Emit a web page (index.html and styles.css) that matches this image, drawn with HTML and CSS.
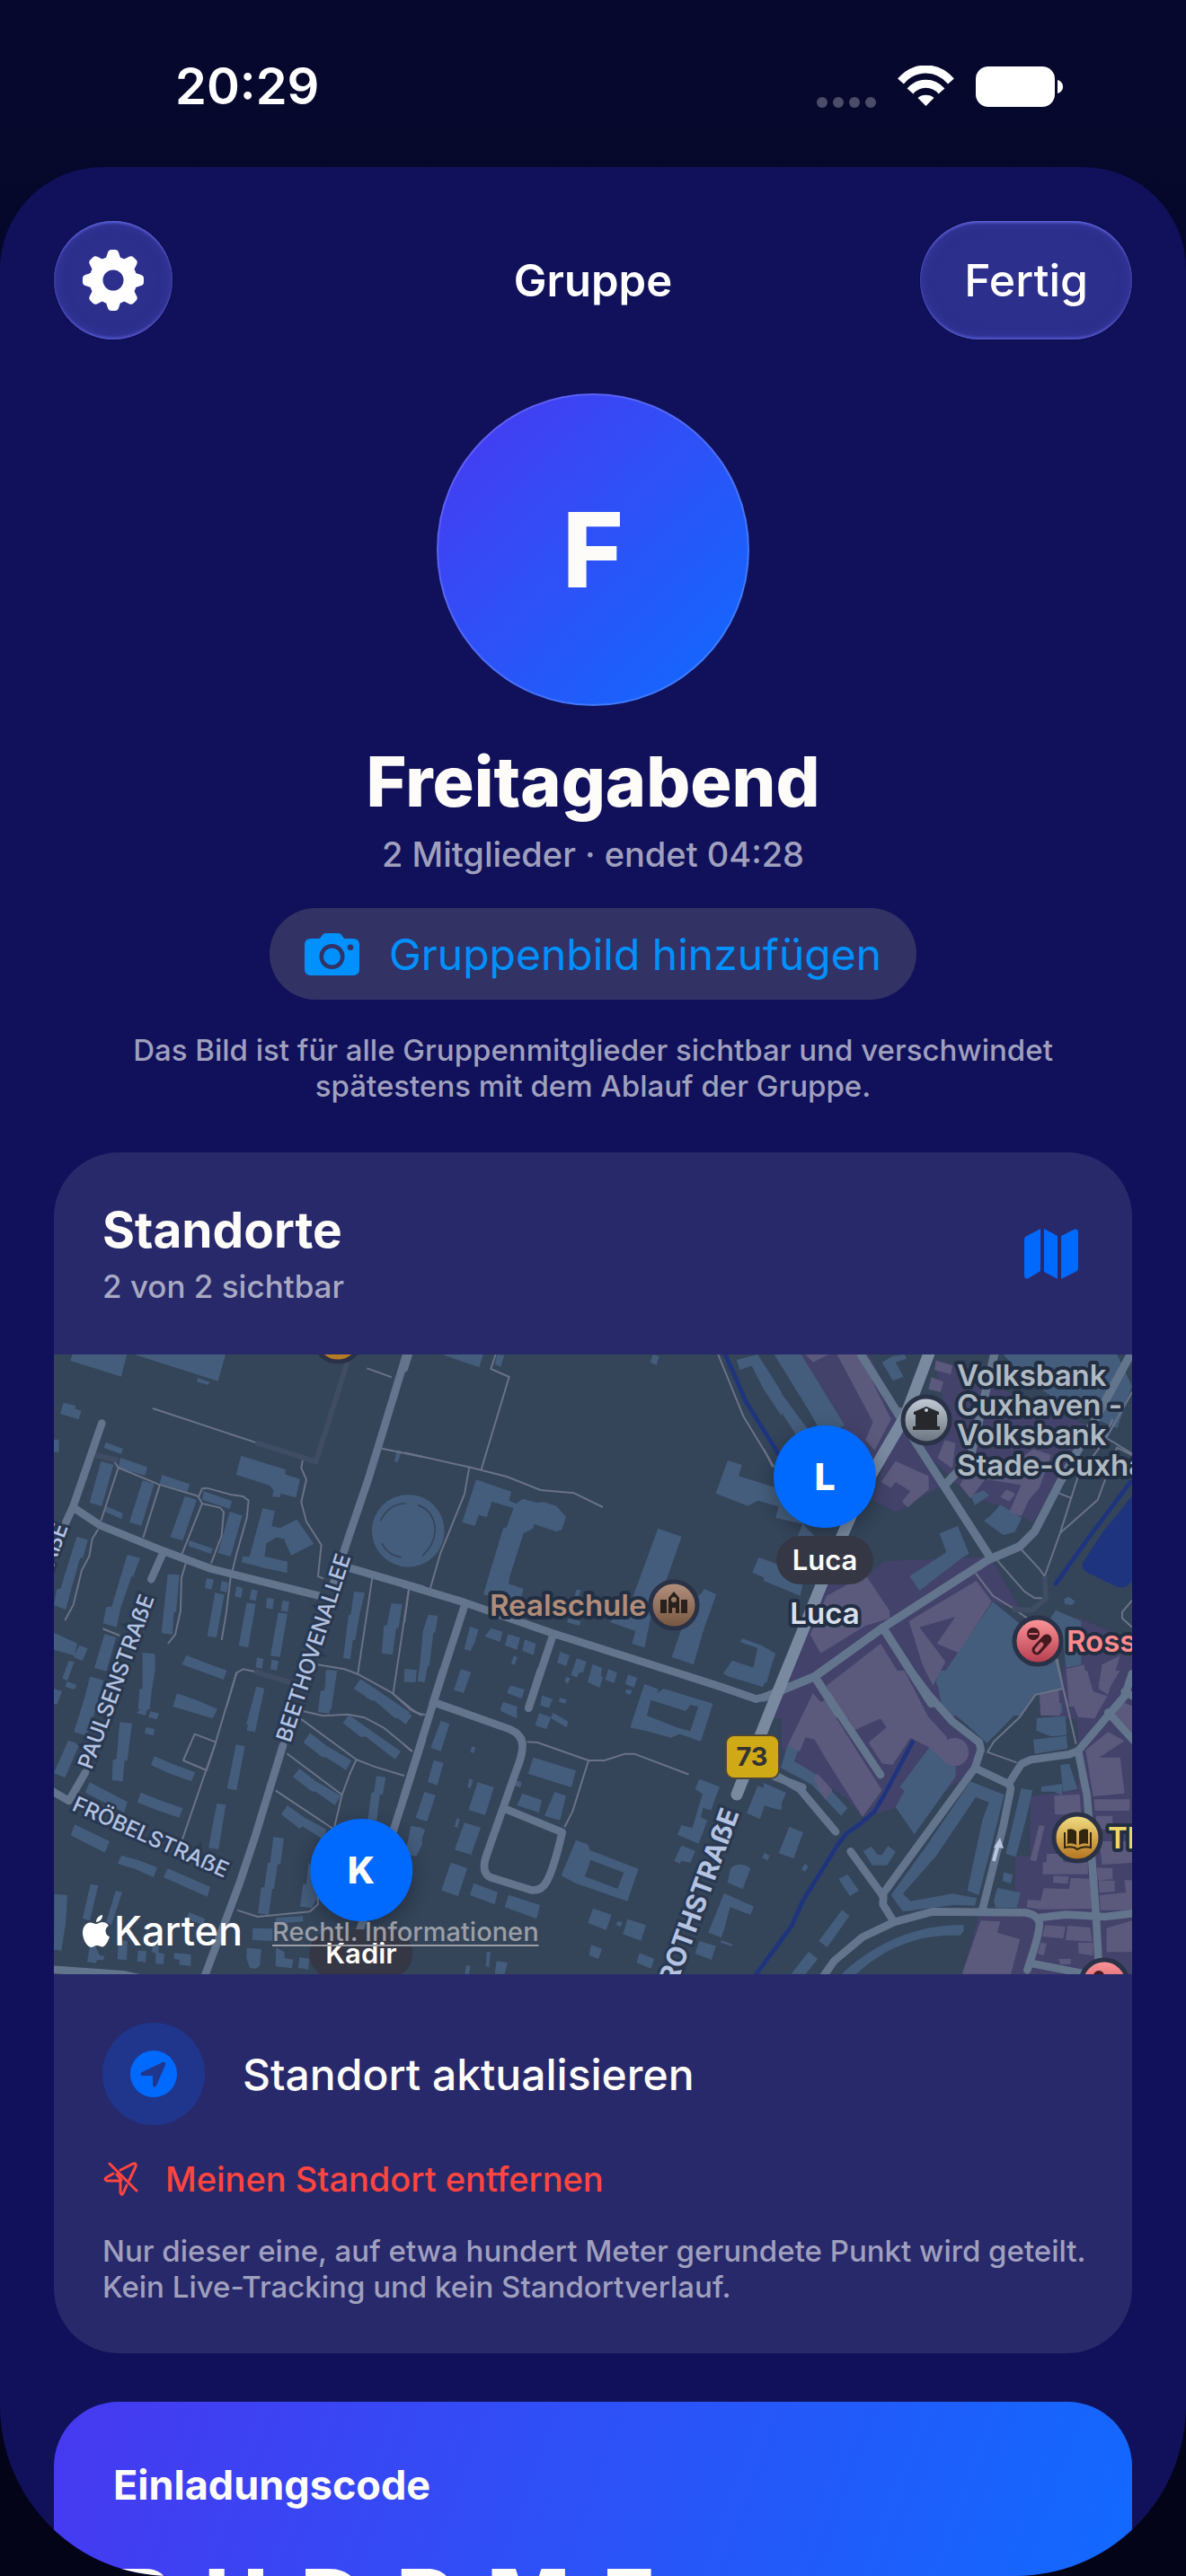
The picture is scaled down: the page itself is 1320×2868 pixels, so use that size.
FILE: index.html
```
<!DOCTYPE html>
<html lang="de">
<head>
	<meta charset="UTF-8">
	<meta name="viewport" content="width=device-width,initial-scale=1">
	<title>Gruppe</title>
	<link rel="stylesheet" href="styles.css">
</head>
<body>
	<div class="screen">
		<div class="status">
			<span class="time">20:29</span>
			<div class="status_icons">
				<span class="dots"><i></i><i></i><i></i><i></i></span>
				<svg class="wifi" viewBox="0 0 63 46" fill="none" stroke="#fff" stroke-width="9">
					<path d="M3.500 17.500C19-0.500 44-0.500 59.500 17.500"/>
					<path d="M14 28.500C23.500 17.500 39.500 17.500 49 28.500"/>
					<path d="M31.500 45L22.500 36C26 31.500 37 31.500 40.500 36Z" fill="#fff" stroke="none"/>
				</svg>
				<svg class="battery" viewBox="0 0 98 45" fill="#fff">
					<rect width="88" height="45" rx="14"/>
					<path d="M91 15C99 17 99 28 91 30Z"/>
				</svg>
			</div>
		</div>

		<main class="sheet">
			<header class="bar">
				<button class="glass round" aria-label="Einstellungen">
					<svg class="gear" viewBox="-34 -34 68 68" fill="#fff">
						<circle r="19" fill="none" stroke="#fff" stroke-width="15"/>
						<g id="teeth">
							<path id="tooth" d="M-9-22L-6-31Q-5-34-2-34H2Q5-34 6-31L9-22Z"/>
							<use href="#tooth" transform="rotate(45)"/>
							<use href="#tooth" transform="rotate(90)"/>
							<use href="#tooth" transform="rotate(135)"/>
						</g>
						<use href="#teeth" transform="rotate(180)"/>
					</svg>
				</button>
				<h1>Gruppe</h1>
				<button class="glass">Fertig</button>
			</header>

			<section class="group">
				<div class="avatar">F</div>
				<h2>Freitagabend</h2>
				<p class="sub">2 Mitglieder · endet 04:28</p>
				<button class="photo">
					<svg class="camera" viewBox="0 0 61 47">
						<path fill="#0091ff" fill-rule="evenodd" d="M7 6H16C18 6 19 1 23 0H38C42 1 43 6 45 6H54Q61 6 61 13V40Q61 47 54 47H7Q0 47 0 40V13Q0 6 7 6ZM30.500 12A14 14 0 1 0 30.500 40A14 14 0 1 0 30.500 12ZM51 12.500A3.200 3.200 0 1 0 51 19A3.200 3.200 0 1 0 51 12.500Z"/>
						<circle cx="30.500" cy="26" r="9.500" fill="#0091ff"/>
					</svg>
					Gruppenbild hinzufügen
				</button>
				<p class="note">Das Bild ist für alle Gruppenmitglieder sichtbar und verschwindet spätestens mit dem Ablauf der Gruppe.</p>
			</section>

			<section class="card">
				<div class="card_head">
					<div>
						<h3>Standorte</h3>
						<p>2 von 2 sichtbar</p>
					</div>
					<svg class="map_icon" viewBox="0 0 60 56" fill="#006aff">
						<path d="M18 0V47L5 55Q0 57 0 51V13Q0 9 3 8Z"/>
						<path d="M22 0L37 8V56L22 48Z"/>
						<path d="M41 8L55 1Q60-1 60 5V43Q60 47 57 48L41 56Z"/>
					</svg>
				</div>

				<div class="map">
					<svg class="map_canvas" viewBox="0 0 1200 690" preserveAspectRatio="xMidYMid slice">
						<defs>
							<linearGradient id="g_school" x2="0" y2="1"><stop stop-color="#b59280"/><stop offset="1" stop-color="#74543f"/></linearGradient>
							<linearGradient id="g_bank" x2="0" y2="1"><stop stop-color="#c5ced8"/><stop offset="1" stop-color="#67717d"/></linearGradient>
							<linearGradient id="g_shop" x2="0" y2="1"><stop stop-color="#ff979a"/><stop offset="1" stop-color="#b43b4d"/></linearGradient>
							<linearGradient id="g_book" x2="0" y2="1"><stop stop-color="#f3e084"/><stop offset="1" stop-color="#b4711c"/></linearGradient>
						</defs>
						<rect width="1200" height="690" fill="#344459"/>

						<!-- commercial areas -->
						<g fill="#43426a">
							<g transform="translate(790 -8) scale(.3333)">
								<path d="M100 0H340L455 230L590 465L440 550L365 510L400 400L270 280Z"/>
								<path d="M570 40L640 60L770 130L1080 260L985 430L900 585L800 530L690 500L590 400L510 320L600 180Z"/>
								<path d="M400 715L755 700L860 880L760 850L580 1130L700 1240H10L150 900L200 790L340 770Z"/>
								<path d="M1040 900L1260 990V1240H960L1000 1080Z"/>
							</g>
							<g transform="translate(790 352) scale(.3333)">
								<path d="M60 60L170 0H480L570 120L740 250L690 340L610 400L440 460L330 490L280 430L150 340L60 260Z"/>
								<path d="M1000 0H1260V1030H660L720 810H840L840 620H890L890 420L1050 400V190Z"/>
							</g>
						</g>

						<!-- buildings -->
						<g fill="#445d7c">
							<g transform="translate(-10 -8) scale(.3333)">
								<path d="M85 45L100 0H280L255 98ZM270 15L290 0H610L578 113ZM510 102L550 116L545 126L507 115ZM62 185L103 195L100 205L122 212L113 241L51 222ZM30 308H47V350H30ZM203 317L261 339L255 357L197 336ZM187 381L229 392L190 531L149 519ZM252 369L342 400L334 428L245 403ZM326 445L365 456L322 596L282 584ZM391 426L484 457L475 483L384 455ZM206 531L261 555L255 574L200 549ZM467 497L507 510L460 646L419 634ZM530 481L625 513L617 540L525 509ZM482 645L560 672L555 690L479 664ZM617 549L659 562L620 699L578 687Z"/>
								<path d="M655 362L803 408V425L852 440L838 502L786 488V501L760 499L763 478L750 461L638 425ZM727 537L768 547L757 597L785 604L841 575L898 657L822 695L798 640L772 635L740 655L733 698L810 716L809 754L735 738L657 718L660 698L683 700Z"/>
								<path d="M106 633L144 643L127 703L117 705L88 808L70 876L30 862L40 808L52 806ZM275 692L318 704L295 766H289L254 868L239 935L194 922L205 868L223 866ZM410 758L449 760L438 884L430 886L426 959L389 955ZM540 771L564 776L556 809L534 804ZM590 780L613 787L607 819L585 813ZM640 798L661 804L655 838L634 832ZM690 808L711 813L704 847L683 842ZM741 836L765 841L760 875L738 870ZM793 845L816 850L811 884L788 880ZM568 820L599 826L573 970L542 965ZM674 853L704 857L679 1002L647 997ZM779 886L810 890L785 1035L753 1030Z"/>
								<path d="M1032 816L1068 820L1050 897L1036 977L1028 979L1020 1042L996 1038L1014 894H1021ZM1157 855L1193 858L1181 937L1173 938L1161 1027L1125 1022L1132 930L1142 928Z"/>
								<path d="M30 953L108 989L98 1030L30 1010ZM115 995L143 1006L125 1048L95 1034ZM80 1047L98 1051L75 1113L58 1106ZM199 958L238 969L205 1082L165 1071ZM150 1101L196 1113L160 1240H115ZM74 1115L106 1128L99 1144L68 1134ZM30 1140L57 1149L40 1194L30 1190ZM326 1020L368 1024V1078L357 1145L350 1210H311L316 1142L326 1140ZM472 1028L540 1055L607 1079L596 1110L530 1085L457 1060ZM441 1156L510 1180L576 1208L560 1240L427 1200ZM708 1036L730 1041L725 1074L704 1069ZM757 1043L780 1048L774 1080L753 1075ZM706 1133L732 1140L700 1260H672ZM938 1077L976 1080L956 1210H914L924 1148L935 1146ZM1056 1109L1110 1145L1220 1220L1170 1240L1100 1180L1031 1140ZM1202 1074L1240 1078L1237 1118L1199 1115Z"/>
								<path d="M1186 344L1190 350L1178 385L1167 380L1175 345Z"/>
							</g>
							<g transform="translate(390 -8) scale(.3333)">
								<circle cx="13" cy="613" r="121"/>
								<path d="M5 522Q-50 520-80 580M45 527Q100 545 103 612Q100 660 60 697M-75 655Q-55 695-10 702" fill="none" stroke="#344459" stroke-width="5"/>
								<path d="M115 20H265L250 67ZM310 24L334 26L322 65L302 58ZM830 24L851 30L842 59L821 51ZM240 442L357 482L350 512L373 522L396 506L446 520L465 517L508 530L540 566L526 608L509 616L432 590V604L398 622L352 766L348 790L398 806L385 860L264 825L288 744L331 602H341L365 536L346 532L292 515L276 567L248 560L236 597L193 584Z"/>
								<path d="M847 605L926 632L876 775L830 870L802 1003L760 990L772 948L685 917L750 870L785 775ZM1001 807L1042 825L1000 942L966 1060L893 1035L960 840L990 825ZM1080 378L1128 393L1116 430L1260 475V535L1180 512L1147 530L1040 488ZM1183 702L1260 730V795L1162 752ZM1128 972L1192 995L1240 1023L1198 1135L1085 1100L1065 1090L1095 1046L1165 1070L1180 1005L1122 985ZM1110 42L1180 24L1260 150V230L1200 140L1160 62L1120 76Z"/>
								<path d="M80 893L112 897L103 952L97 954L84 1064L78 1066L68 1119L44 1116L53 1052L62 948ZM2 1075L42 1078L37 1118H0ZM219 933L248 943L236 984L221 1015L200 1008ZM290 938L328 950L320 984L268 966ZM346 958L387 970L376 1010L336 996ZM402 976L440 990L431 1028L394 1013ZM365 1030L378 1035L368 1061L357 1056ZM189 1075L223 1085L198 1155L165 1145ZM359 1130L402 1143L392 1172L343 1155ZM330 1186L376 1200V1240L322 1215ZM521 1016L552 1030L541 1064L510 1054ZM576 1038L608 1050L597 1087H583L577 1103L556 1095ZM540 1100L555 1106L545 1124L536 1117ZM629 1058L660 1070L657 1097L663 1104L652 1137L612 1118ZM681 1075L711 1087L700 1122L671 1110ZM747 1093L778 1105L767 1137L738 1125ZM741 1142L762 1146L755 1161L738 1155ZM460 1163L495 1175L482 1205L455 1196ZM520 1170L543 1178L537 1190L516 1184ZM575 810H590L580 840L560 860ZM550 905L590 915L584 930L542 918Z"/>
							</g>
							<g transform="translate(790 -8) scale(.3333)">
								<path d="M20 0H110L270 260L200 300L150 210ZM0 75L160 290L120 310L0 130ZM0 460L60 480L140 600L180 640H110L130 590L40 570L50 530L0 510ZM395 50L430 30L470 24L477 38L440 50L467 98L432 112ZM587 622L648 597L686 690L660 705L520 813L487 765L610 685ZM0 708L70 735L130 790L122 830L50 800L0 780ZM690 495L735 478L753 495L705 527ZM760 560L790 525L862 570L838 618L800 627L735 580ZM765 850L900 960L985 1060L1000 1130L910 1160L860 1230H600L580 1120ZM1003 840L1020 833L1040 850L1030 861L1006 858ZM975 878L1060 915V1060L1010 1070L1000 990L955 910ZM0 1005L38 1022L10 1120H0ZM800 24H1180L1230 130L1180 270L1010 200L860 90Z"/>
							</g>
							<g transform="translate(-10 352) scale(.3333)">
								<path d="M327 123L342 128L336 150L306 142ZM352 136L381 143L374 163L345 155ZM337 189L367 195L362 216L333 209ZM154 20L196 33L140 218L97 205ZM250 172L291 176L275 300L266 302L260 370L224 366L227 298L239 295ZM78 233L115 246L67 358L30 342ZM365 286L435 315L502 340L489 370L420 345L354 316ZM706 54L733 60L702 205L674 200ZM638 247L668 252L640 400L608 394ZM574 444L604 448L580 597L546 592ZM149 373L276 439L264 474L135 407ZM320 407L390 435L461 460L448 491L380 468L309 440ZM100 514L216 570L200 608L86 550ZM255 617L310 632L375 657L363 690L300 662L243 645ZM410 661L552 722L542 755L396 690ZM152 713L178 718L150 835L126 828ZM236 735L258 740L222 850L205 840ZM32 747L75 749L70 840L55 935L30 932ZM480 807L534 828L530 850L474 830ZM156 890L182 950L200 955L195 967L175 966L170 977L141 972ZM246 900L276 903L273 967L242 964ZM311 935L339 937L336 974L308 971ZM360 918L380 920L379 942L399 945L396 980L369 979L370 945L356 938ZM432 943L488 948L487 987L448 982L450 966L430 963ZM694 860L760 862V903L692 900ZM674 926L722 930L718 985L705 996L684 993L673 960ZM772 925L800 940V960L829 965L825 994L770 988ZM850 957L883 962L880 998L846 992ZM772 825L862 820V838L770 845Z"/>
								<path d="M885 208L942 252L1024 300L1005 332L940 290L925 288L863 240ZM850 327L905 370L988 418L968 450L905 405L890 403L828 355ZM810 450L865 490L940 530L930 565L860 520L850 528L789 480ZM1015 148L1070 187L1188 270L1170 297L1070 220L1055 222L995 175ZM1052 30L1108 70L1225 150L1205 180L1105 100L1090 100L1031 60ZM946 0H974L950 144L912 138L920 68L933 66ZM1107 352L1138 356L1128 413L1118 414L1108 500H1078L1090 408L1099 406ZM763 555L798 560L787 645L777 648L765 728L759 730L747 815L711 810L722 725L733 723L744 643L752 641ZM880 640L890 660L910 760L890 793L852 788L862 714L873 712ZM1222 518L1260 525V580L1240 620L1205 610ZM1260 430V500L1240 490Z"/>
							</g>
							<g transform="translate(390 352) scale(.3333)">
								<path d="M122 167L151 178L122 269L88 258ZM98 299L131 308L110 383L78 371ZM67 405L104 416L76 504L38 491ZM27 519L70 531L36 620L0 610ZM227 252L238 258L231 277L220 271ZM218 360L229 365L221 394L211 389ZM245 372L299 390L270 483L214 465ZM176 492L185 497L177 526L167 521ZM200 508L255 524L223 615L168 598ZM155 641L210 660L180 753L124 734ZM232 710L312 740L302 781L219 750ZM348 749L453 783L442 829L335 790ZM431 290L573 334L558 390L413 344ZM372 366L392 373L388 390L368 384ZM394 410L459 433L450 474L376 450ZM502 405L540 418L520 500L468 485ZM330 105L377 120L368 146L320 130ZM352 52L400 64L390 92L343 74ZM450 142L490 155L475 196L437 183ZM460 84L495 97L483 124L454 114ZM495 140L548 170L542 190L490 160ZM630 794L692 815L674 867L613 842ZM745 830L807 850L790 902L730 880ZM624 915L660 930L648 963L617 950ZM785 943L834 962L824 996L776 976ZM712 836L729 840L722 856L707 850ZM275 938L288 940L283 990L272 988ZM308 970L345 975L335 1013H302ZM206 984L221 986L216 1013H202Z"/>
								<path fill-rule="evenodd" d="M802 44L848 62L845 75L865 60L1031 110L990 236L920 212L890 224L820 205L754 190ZM823 98L810 150L910 190L955 202L982 120L955 115L940 135Z"/>
								<path fill-rule="evenodd" d="M573 566L612 580L620 600L782 662L745 770L572 710L524 685ZM622 632L603 688L712 728L733 675Z"/>
								<path d="M985 362L1053 388L1024 467L998 458L990 490L1012 500L983 578L912 548L925 516L962 525L996 412L971 395ZM925 584L972 602L955 642L925 635L920 645L901 635ZM1180 385L1260 410V465L1203 450L1188 496L1143 476ZM1090 660Q1120 635 1156 660L1130 730L1079 708ZM1068 743L1167 788L1156 816L1088 790L1068 865L1058 892L1015 875ZM1060 900L1097 915L1093 920L1055 908ZM985 903L1041 920L1025 966L971 945ZM1203 608L1220 618L1212 634L1195 625ZM1065 0H1220L1195 54Z"/>
							</g>
							<g transform="translate(790 352) scale(.3333)">
								<path d="M585 0H980L1000 60L910 75L745 243L700 200L620 130L575 40ZM80 247L117 262L102 302L180 350L280 460L258 485L160 380L57 325ZM555 254L642 322L640 355L503 547L440 455L470 402L455 388ZM0 375L75 408L50 465L0 450ZM85 521L132 540L100 627L50 610ZM138 644L149 655L138 671L126 663ZM332 604L360 587L380 615H395L415 585L441 605L412 650H363ZM250 695L280 681L318 735L288 753ZM262 799L286 820L212 924L184 903ZM150 938L181 963L140 1013H92ZM260 1013C380 900 520 848 668 850V870L655 885C540 880 420 910 310 1013Z"/>
								<path fill-rule="evenodd" d="M690 370L803 415L757 600L718 750L680 735L730 500L752 440L708 423L575 620L465 745L490 770L630 745L712 760L705 785L640 782L465 805L425 750L540 590Z"/>
								<path d="M860 393L898 400L875 500L842 622L808 612ZM802 673L832 682L825 712L797 702ZM780 725L858 742L845 792H775L768 770ZM912 158L1007 152L1012 215L960 220L910 200ZM900 230L1010 218L1015 260L905 278ZM925 115L995 108L998 142L930 147ZM990 315L1020 311L1048 395L1000 405ZM927 388L997 378V418L970 404H927Z"/>
							</g>
						</g>
						<g fill="#5b5a7d">
							<g transform="translate(790 -8) scale(.3333)">
								<path d="M140 24H215L165 50ZM245 24H320L395 180L425 240L370 345L340 310L365 250ZM440 380L550 430L552 475L480 535L462 515L490 480L440 450L425 470L392 450ZM575 45L630 60L625 90L570 75ZM560 100L600 115L590 150L550 140ZM605 310L640 320L630 405L580 370ZM655 460L700 380L820 400L900 340L960 360L920 470L885 510L860 565L820 550L860 460L740 440L690 505ZM810 475L840 490L820 515L790 500ZM340 760L420 880V905L340 930L190 1022L155 960L210 830ZM485 915L710 780L762 850L650 1020L578 990L640 900L520 935L607 1050L565 1130L530 1060ZM210 1130L390 990L545 1240H260ZM1010 1075L1070 1060L1090 1200H1020ZM1130 1060L1190 1030L1150 1160L1118 1140ZM920 1155L985 1145L990 1230H925Z"/>
							</g>
							<g transform="translate(790 352) scale(.3333)">
								<path d="M212 50L290 0H470L550 155L610 220L640 320L590 290L550 255L490 225L430 315L395 310L350 240L410 190L390 160L300 200L270 130ZM165 75L190 105L205 100L395 400L330 488L205 290L170 230L140 222L120 270L80 250ZM165 360L180 345L230 400L205 430Z"/>
								<circle cx="637" cy="272" r="47"/>
								<path d="M1015 0H1080L1100 70L1147 85L1105 160L1050 155L1020 80ZM1140 0H1190L1150 65L1118 45ZM1185 100L1260 130V240L1170 150ZM1075 265L1150 205L1205 235L1120 290L1190 290L1205 410L1100 420ZM970 418L1055 413L1060 480H972ZM920 515L938 520L910 637L890 632ZM1103 430H1222V468H1106ZM945 612H1000V640H1083V680H932V640H945ZM968 685L1018 688L1015 712L966 708ZM935 727L1020 730L1025 692L1088 695L1095 795L920 797L878 790L882 765L925 768ZM1112 658L1165 660V697L1115 700ZM1118 700L1172 702V738L1120 742ZM1110 485H1165V530H1110ZM1120 570H1260V640L1130 648ZM1205 700H1260V800H1215ZM1120 750L1220 740L1225 800H1125ZM725 835L790 838L780 875L856 897L825 1013H662ZM940 850L1008 855L1000 895L930 888ZM1015 852L1090 858L1098 905L1008 900ZM1145 860L1230 835V940H1145ZM1050 908L1100 910V952L1052 945ZM925 908L945 912L935 952L915 945ZM985 963L1025 962V980L990 982Z"/>
							</g>
						</g>

						<!-- water -->
						<g fill="none" stroke="#1f347e" stroke-width="14" stroke-linecap="round" stroke-linejoin="round">
							<path transform="translate(390 -8) scale(.3333)" d="M1070 20L1110 110L1140 180L1255 365"/>
							<g transform="translate(790 -8) scale(.3333)">
								<path d="M975 790L1090 630L1225 450"/>
								<path fill="#1f347e" stroke="none" d="M1260 460L1130 620L1065 720Q1060 740 1080 752L1180 800Q1210 808 1225 785L1260 750Z"/>
							</g>
							<path transform="translate(790 352) scale(.3333)" d="M497 238L400 420L370 470L325 510L275 545L245 585L130 770L95 850L0 980L-40 1035"/>
						</g>

						<!-- footpaths -->
						<g fill="none" stroke="#6a7286" stroke-width="6" stroke-linejoin="round">
							<g transform="translate(-10 -8) scale(.3333)">
								<path d="M360 204L710 320M1075 70L1158 100M1125 338L1260 366M230 380L245 402L380 458L505 495L513 500L525 472L540 470L620 492L662 498L680 512L674 570L640 690L620 770L605 890L590 978M245 402L187 580M384 458L328 636M513 500L525 522L458 690M525 522L585 536L597 550L590 630L555 722M178 608L158 640L148 698L123 745L95 860L67 912M193 940L250 963M470 722L456 770L453 880L435 960L411 990M861 375L856 403L873 442L856 517L873 582L923 660L912 765L930 773M1093 770L1045 1090M1215 810L1163 1155M910 1060L1000 1075L1045 1092L1160 1155L1220 1205M607 1200L640 1087L662 1075L700 1083"/>
							</g>
							<g transform="translate(390 -8) scale(.3333)">
								<path d="M0 352L215 400L342 432L455 477L567 487L663 534M305 24L289 72L350 99L257 408M217 400L201 490L120 690L87 805M15 810L0 920M1048 24L1132 230L1235 400"/>
							</g>
							<g transform="translate(790 -8) scale(.3333)">
								<path d="M0 340L30 400M1230 150L1140 310L1050 430L990 620L938 765L920 740L860 675M990 620L1115 510L1180 335L1230 360M985 487L1025 503M780 712L870 815L905 838H930M708 755L765 830L830 870L880 905M1230 845L1197 885V905L1230 935M975 1040L1015 1200M1165 240L1140 300L1230 355"/>
							</g>
							<g transform="translate(-10 352) scale(.3333)">
								<path d="M640 5L570 240L455 575M500 212L571 239L540 333L462 300ZM860 135L930 151L1010 146L1068 157L1130 190L1228 270M850 158L1040 297L1098 320L1200 351M1040 297L1018 345L992 415L965 530M808 277L992 415M770 400L965 530M642 800L710 822L885 805L912 780V700M1160 75L1220 130L1260 150"/>
							</g>
							<g transform="translate(390 352) scale(.3333)">
								<path d="M0 110C30 135 50 148 70 147M410 238L445 240L615 300H668L737 278H768L950 347M615 300L562 470L535 523M0 248L25 270"/>
							</g>
							<g transform="translate(790 352) scale(.3333)">
								<path d="M980 -40L1000 60L1043 245M1000 60L908 80L855 155L768 238L747 272L845 307"/>
							</g>
						</g>
						<g fill="none" stroke="#3f4c64" stroke-width="18" stroke-linejoin="round">
							<path transform="translate(-10 -8) scale(.3333)" d="M703 318L905 382L1010 50M170 360L245 378M700 1083L820 1120"/>
							<path transform="translate(790 -8) scale(.3333)" d="M938 765L942 840L895 878L830 875"/>
						</g>

						<!-- streets -->
						<g fill="none" stroke="#63748d" stroke-linecap="round" stroke-linejoin="round">
							<g transform="translate(-10 -8) scale(.3333)" stroke-width="26">
								<path d="M190 254L95 530L70 585M95 535L185 595L395 680L555 740L915 830M395 685L355 775M1207 24L1080 440L1012 640L960 800M1010 735L1260 808"/>
							</g>
							<g transform="translate(390 -8) scale(.3333)" stroke-width="26">
								<path d="M0 792L200 852L495 955L1060 1135L1175 1175L1240 1158M202 860L95 1190M497 960L415 1205M0 70L14 24"/>
							</g>
							<g transform="translate(790 -8) scale(.3333)" stroke-width="28">
								<path d="M325 24L510 320L755 700M1225 24L1140 180L990 450L905 615L855 665L750 710L400 935L170 1100L0 1170M455 215L510 320M400 940L560 1190M170 1100L250 1225M610 455L690 370L770 24"/>
							</g>
							<g transform="translate(-10 352) scale(.3333)" stroke-width="26">
								<path d="M135 340L80 435L20 400M795 250L700 560L650 710L530 1030M1260 230L1165 530L1040 900M20 998L260 1015L330 1030"/>
							</g>
							<g transform="translate(390 352) scale(.3333)" stroke-width="26">
								<path d="M130 0L90 130L0 420M110 110L350 195Q400 215 394 260Q392 290 375 330L275 615Q255 670 285 690L420 732Q455 740 475 705Q500 660 527 540L345 465M415 125L455 0M1200 340L1330 390"/>
							</g>
							<g transform="translate(790 352) scale(.3333)" stroke-width="26">
								<path d="M0 90L170 20M170 20L390 348M490 0L550 80L630 170L720 240L725 265L705 325L395 750M50 355L120 395L240 538M290 604L400 755L398 780L435 840M705 325L820 380L825 395L800 520L730 800M820 375L860 312L890 298L1020 280L1050 268L1205 85L1230 10M1205 70L1260 100M1150 140L1260 260M1050 268L1080 420L1110 820L1120 1013M200 1020L235 970L330 890L435 840L565 805L870 808Q910 812 920 840Q925 870 880 1000M920 825L1010 815L1140 822L1260 808M895 978L1060 1010"/>
							</g>
							<g stroke="#7889a0">
								<path stroke-width="13" d="M975 -4L948 68L900 150L865 230L800 390L760 490"/>
							</g>
						</g>
						<path d="M1046 564L1051 545" stroke="#b9c6e0" stroke-width="4"/>
						<path d="M1053 538L1057 550L1051 549L1046 549Z" fill="#b9c6e0"/>

						<!-- street names -->
						<g class="street">
							<text transform="translate(42 463) rotate(-70)">PAULSENSTRAẞE</text>
							<text transform="translate(263 433) rotate(-72)">BEETHOVENALLEE</text>
							<text transform="translate(19 507) rotate(24)">FRÖBELSTRAẞE</text>
							<text transform="translate(16 192) rotate(-70)" text-anchor="end">STRAẞE</text>
							<text class="main_street" transform="translate(763 510) rotate(-70)" text-anchor="end">ROTHSTRAẞE</text>
						</g>
						<rect x="748" y="424" width="59" height="48" rx="9" fill="#d0a916" stroke="#4b463d" stroke-width="2"/>
						<text class="route" x="777" y="458" text-anchor="middle">73</text>

						<!-- places -->
						<g stroke="#2a3247" stroke-width="5">
							<circle cx="316" cy="-18" r="26" fill="#b67b24"/>
							<circle cx="690" cy="279" r="26" fill="url(#g_school)"/>
							<circle cx="971" cy="73" r="26" fill="url(#g_bank)"/>
							<circle cx="1095" cy="319" r="26" fill="url(#g_shop)"/>
							<circle cx="1139" cy="538" r="26" fill="url(#g_book)"/>
							<circle cx="1169" cy="700" r="26" fill="url(#g_shop)"/>
						</g>
						<path fill="#2b211c" fill-rule="evenodd" d="M675 273H682V288H675ZM698 273H705V288H698ZM684 288V271L690 264L696 271V288H692V282H688V288ZM690 270A3 3 0 1 0 690 276A3 3 0 1 0 690 270Z"/>
						<path fill="#26282b" d="M957 64L971 58L985 64V67H983V80H986V84H956V80H959V67H957Z"/>
						<circle cx="971" cy="62" r="2" fill="#c5ced8"/>
						<circle cx="1090" cy="311" r="7" fill="#45191e"/>
						<path d="M1085 311H1095" stroke="#d06871" stroke-width="2"/>
						<path d="M1094 329L1105 317" stroke="#45191e" stroke-width="11" stroke-linecap="round"/>
						<path d="M1094 329L1099 323" stroke="#d06871" stroke-width="5" stroke-linecap="round"/>
						<path fill="#33260f" d="M1128 529Q1134 527 1138 531V546Q1133 543 1128 545ZM1151 529Q1145 527 1141 531V546Q1146 543 1151 545Z"/>
						<path d="M1125 532V549Q1134 547 1139 551Q1145 547 1154 549V532" fill="none" stroke="#33260f" stroke-width="2"/>
						<circle cx="1163" cy="692" r="6" fill="#45191e"/>
						<g class="place">
							<text x="485" y="291" fill="#b08c79">Realschule</text>
							<g fill="#b0bac2">
								<text x="1005" y="35">Volksbank</text>
								<text x="1005" y="68">Cuxhaven -</text>
								<text x="1005" y="101">Volksbank</text>
								<text x="1005" y="135">Stade-Cuxhaven</text>
							</g>
							<text x="1127" y="331" fill="#ff898d">Rossmann</text>
							<text x="1173" y="550" fill="#eed668">Thalia</text>
							<text x="858" y="300" fill="#d9dfea" text-anchor="middle">Luca</text>
						</g>
					</svg>

					<div class="pin luca">
						<span class="pin_dot">L</span>
						<span class="pin_name">Luca</span>
					</div>
					<div class="pin kadir">
						<span class="pin_dot">K</span>
						<span class="pin_name">Kadir</span>
					</div>

					<div class="credits">
						<span class="brand">
							<svg class="apple" viewBox="0 0 30 36" fill="#fff">
								<path d="M15 10C17 10 19 8 22 8C25 8 27.500 9.500 29 12C24 15 24.500 22 30 24.500C28 30 25 35.500 22 35.500C19.500 35.500 18.500 34 16 34C13 34 12 36 9.500 36C5 36 0 27 0 20C0 13 4 8.500 8.500 8.500C11 8.500 13 10 15 10ZM15 8C15 4 18 0.500 22 0C22.500 4 19 8 15 8Z"/>
							</svg>
							Karten
						</span>
						<a href="#" class="legal">Rechtl. Informationen</a>
					</div>
				</div>

				<div class="card_body">
					<button class="refresh">
						<span class="refresh_icon">
							<svg viewBox="0 0 52 52">
								<circle cx="26" cy="26" r="26" fill="#006aff"/>
								<path fill="#1f368c" d="M36 13Q40 12 39 16L29 39Q26 43 25 38V28H14Q9 27 13 24Z"/>
							</svg>
						</span>
						Standort aktualisieren
					</button>
					<button class="remove">
						<svg viewBox="0 0 40 38" fill="none" stroke="#ff453f" stroke-width="3" stroke-linecap="round" stroke-linejoin="round">
							<path d="M20 9L34 2Q38 1 37 5L30 20M27 26L23 35Q21 38 20 34V21H5Q1 19 5 17L12 13M8 2L38 32M16 14L21 20"/>
						</svg>
						Meinen Standort entfernen
					</button>
					<p class="note">Nur dieser eine, auf etwa hundert Meter gerundete Punkt wird geteilt. Kein Live-Tracking und kein Standortverlauf.</p>
				</div>
			</section>

			<section class="invite">
				<h3>Einladungscode</h3>
				<p class="code">BUDRMF</p>
			</section>
		</main>
	</div>
</body>
</html>
```
FILE: styles.css
```
* {
	padding: 0;
	margin: 0;
	box-sizing: border-box;
}

html {
	background: #040418;
}

body {
	color: #fff;
	font-family: Inter, "Noto Sans", sans-serif;
}

button {
	border: 0;
	background: none;
	color: inherit;
	font: inherit;
	cursor: pointer;
}

svg {
	display: block;
	flex: none;
}

.screen {
	height: 100vh;
	display: flex;
	flex-direction: column;
	background: linear-gradient(#06082e, #05072a 10%, #040418);
}

/* status bar */
.status {
	height: 186px;
	padding: 6px 136px 0 195px;
	display: flex;
	flex: none;
	justify-content: space-between;
	align-items: center;
}

.time {
	font-size: 56px;
	font-weight: 600;
}

.status_icons {
	display: flex;
	align-items: center;
	gap: 24px;
}

.dots {
	display: flex;
	gap: 6px;
	padding-top: 36px;
}

.dots i {
	width: 12px;
	height: 12px;
	border-radius: 50%;
	background: #4b4c69;
}

.wifi {
	width: 63px;
	height: 46px;
}

.battery {
	width: 98px;
	height: 45px;
}

/* sheet */
.sheet {
	flex: 1;
	padding: 60px 60px 0;
	display: flex;
	flex-direction: column;
	overflow: hidden;
	background: #10115a;
	border-radius: 114px 114px 190px 190px;
}

.sheet > * {
	flex: none;
}

.bar {
	display: grid;
	grid-template-columns: 1fr auto 1fr;
	align-items: center;
}

.bar h1 {
	font-size: 49px;
	font-weight: 600;
}

.glass {
	height: 132px;
	padding: 0 49px;
	border-radius: 66px;
	background: #2d2f8c;
	box-shadow: inset 0 3px 3px -1px #5f61dc, inset 0 -3px 3px -1px #5658d2, inset 0 0 14px #393ba0, 0 0 0 1px #0b0c44;
	font-size: 50px;
	font-weight: 500;
	justify-self: end;
}

.round {
	width: 132px;
	padding: 0 32px;
	justify-self: start;
}

.gear {
	width: 68px;
	height: 68px;
}

/* group */
.group {
	display: flex;
	flex-direction: column;
	align-items: center;
	padding: 60px 66px 54px;
	text-align: center;
}

.avatar {
	width: 348px;
	height: 348px;
	border: 2px solid rgba(255, 255, 255, .16);
	border-radius: 50%;
	background: linear-gradient(135deg, #4a38f0, #0f6bff) border-box;
	color: #fdfcf8;
	font-size: 116px;
	font-weight: 800;
	line-height: 344px;
}

.group h2 {
	margin-top: 36px;
	color: #fdfcf8;
	font-size: 77px;
	font-weight: 800;
	line-height: 96px;
}

.sub {
	margin-top: 9px;
	color: #a0a0be;
	font-size: 38px;
	font-weight: 500;
	line-height: 48px;
}

.photo {
	height: 102px;
	margin: 36px 0;
	padding: 0 39px;
	display: flex;
	align-items: center;
	gap: 33px;
	border-radius: 51px;
	background: #323265;
	color: #0091ff;
	font-size: 48px;
}

.camera {
	width: 61px;
	height: 47px;
}

.note {
	color: #a0a0be;
	font-size: 33px;
	font-weight: 500;
	line-height: 40px;
}

/* locations card */
.card {
	border-radius: 72px;
	background: #28296b;
	overflow: hidden;
}

.card_head {
	padding: 54px;
	display: flex;
	justify-content: space-between;
	align-items: center;
}

.card_head h3 {
	color: #fdfcf8;
	font-size: 55px;
	font-weight: 700;
	line-height: 64px;
}

.card_head p {
	margin-top: 9px;
	color: #a9a9c3;
	font-size: 35px;
	font-weight: 500;
	line-height: 44px;
}

.map_icon {
	width: 60px;
	height: 56px;
	margin-right: 6px;
}

.map {
	position: relative;
	height: 690px;
	overflow: hidden;
}

.map_canvas {
	width: 100%;
	height: 100%;
}

.street {
	fill: #b4c3e2;
	stroke: #293850;
	stroke-width: 6px;
	paint-order: stroke;
	font-size: 24px;
	font-weight: 500;
}

.main_street {
	font-size: 30px;
	font-weight: 700;
}

.route {
	fill: #333;
	font-size: 29px;
	font-weight: 700;
}

.place {
	stroke: #222e42;
	stroke-width: 8px;
	stroke-linejoin: round;
	paint-order: stroke;
	font-size: 33px;
	font-weight: 600;
}

/* map pins */
.pin {
	position: absolute;
	display: flex;
	flex-direction: column;
	align-items: center;
	gap: 9px;
	transform: translateX(-50%);
	color: #fdfcf8;
}

.luca {
	left: 858px;
	top: 79px;
}

.kadir {
	left: 342px;
	top: 517px;
}

.pin_dot {
	width: 114px;
	height: 114px;
	border-radius: 50%;
	background: #006aff;
	box-shadow: 0 6px 20px rgba(0, 0, 0, .3);
	font-size: 41px;
	font-weight: 800;
	line-height: 114px;
	text-align: center;
}

.pin_name {
	padding: 0 18px;
	border-radius: 27px;
	background: #353744;
	font-size: 31px;
	font-weight: 600;
	line-height: 54px;
}

.credits {
	position: absolute;
	left: 32px;
	bottom: 18px;
	display: flex;
	align-items: center;
	gap: 33px;
}

.brand {
	display: flex;
	align-items: center;
	gap: 5px;
	font-size: 45px;
	font-weight: 500;
	line-height: 60px;
}

.apple {
	width: 30px;
	height: 36px;
}

.legal {
	color: #9b9ea6;
	font-size: 29px;
	font-weight: 500;
	text-underline-offset: 4px;
}

.card_body {
	padding: 54px 42px 54px 54px;
	display: flex;
	flex-direction: column;
	align-items: flex-start;
	gap: 36px;
}

.refresh {
	display: flex;
	align-items: center;
	gap: 42px;
	color: #fdfcf8;
	font-size: 48px;
	font-weight: 500;
}

.refresh_icon {
	width: 114px;
	height: 114px;
	display: flex;
	align-items: center;
	justify-content: center;
	border-radius: 50%;
	background: #1f368c;
}

.refresh_icon svg {
	width: 52px;
	height: 52px;
}

.remove {
	display: flex;
	align-items: center;
	gap: 30px;
	color: #ff453f;
	font-size: 38px;
	font-weight: 500;
	line-height: 48px;
}

.remove svg {
	width: 40px;
	height: 38px;
}

/* invite card */
.invite {
	margin-top: 54px;
	padding: 66px;
	border-radius: 72px;
	background: linear-gradient(110deg, #4739f0, #0f6bff);
	color: #fdfcf8;
}

.invite h3 {
	font-size: 45px;
	font-weight: 700;
	line-height: 54px;
}

.code {
	margin-top: 42px;
	font-size: 98px;
	font-weight: 800;
	line-height: 120px;
	letter-spacing: 36px;
}
```
